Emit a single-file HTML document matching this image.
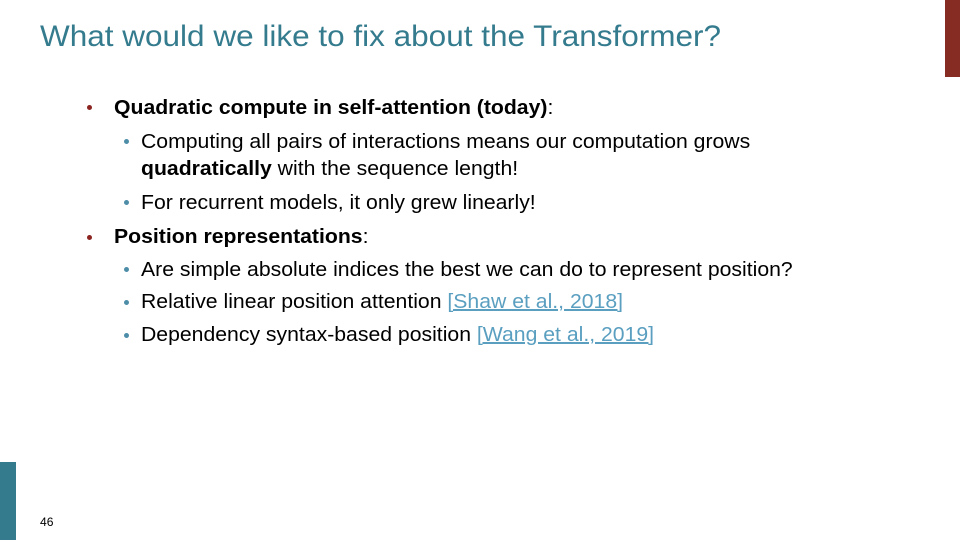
<!DOCTYPE html>
<html><head><meta charset="utf-8"><style>
body{margin:0;width:960px;height:540px;background:#fff;position:relative;overflow:hidden;font-family:"Liberation Sans",sans-serif;}
.a{position:absolute;white-space:nowrap;transform-origin:0 50%;transform:scaleX(1.01);color:#000;}
.t{font-size:30px;color:#347b8e;left:40px;top:20px;transform:scaleX(1.05);}
.l{font-size:20px;line-height:24px;transform:scaleX(1.06);}
.b{position:absolute;width:5px;height:5px;border-radius:50%;}
.r{background:#8b2420}.c{background:#4e8da8}
a{color:#5a9fc0;text-decoration:underline;}
</style></head><body>
<div style="position:absolute;left:945px;top:0;width:15px;height:77px;background:#862c22"></div>
<div style="position:absolute;left:0;top:462px;width:16px;height:78px;background:#347b8e"></div>
<div class="a t">What would we like to fix about the Transformer?</div>
<div class="b r" style="left:87px;top:105px"></div>
<div class="a l" style="left:114px;top:96px"><b>Quadratic compute in self-attention (today)</b>:</div>
<div class="b c" style="left:124px;top:139px"></div>
<div class="a l" style="left:141px;top:130px">Computing all pairs of interactions means our computation grows</div>
<div class="a l" style="left:141px;top:157px"><b>quadratically</b> with the sequence length!</div>
<div class="b c" style="left:124px;top:200px"></div>
<div class="a l" style="left:141px;top:191px">For recurrent models, it only grew linearly!</div>
<div class="b r" style="left:87px;top:235px"></div>
<div class="a l" style="left:114px;top:225px"><b>Position representations</b>:</div>
<div class="b c" style="left:124px;top:267px"></div>
<div class="a l" style="left:141px;top:258px">Are simple absolute indices the best we can do to represent position?</div>
<div class="b c" style="left:124px;top:300px"></div>
<div class="a l" style="left:141px;top:290px">Relative linear position attention <a>[Shaw et al., 2018]</a></div>
<div class="b c" style="left:124px;top:333px"></div>
<div class="a l" style="left:141px;top:323px">Dependency syntax-based position <a>[Wang et al., 2019]</a></div>
<div class="a" style="left:40px;top:515px;font-size:12px">46</div>
</body></html>
